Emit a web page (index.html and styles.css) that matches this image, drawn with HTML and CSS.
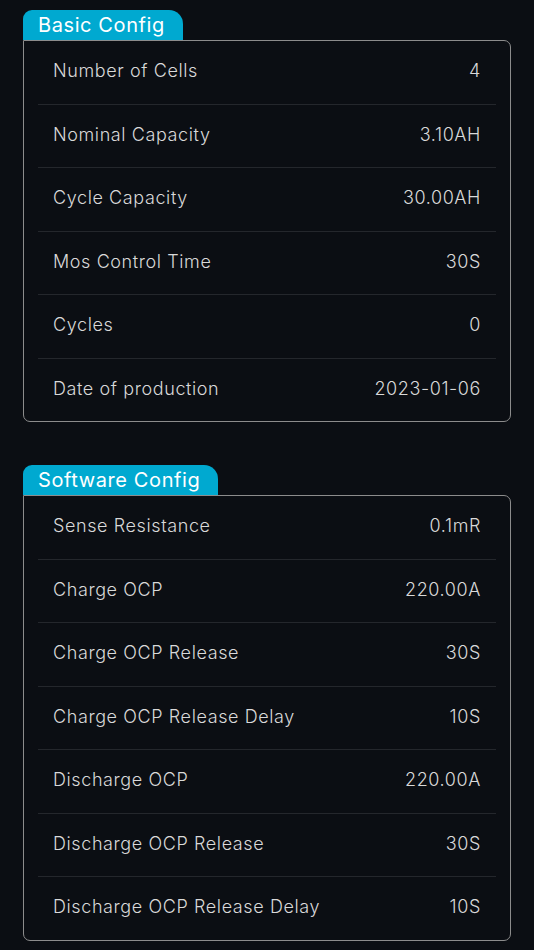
FILE: index.html
```html
<!DOCTYPE html>
<html lang="en">

<head>
    <meta charset="UTF-8">
    <meta name="viewport" content="width=device-width, initial-scale=1.0">
    <title>Battery Config</title>
    <link rel="stylesheet" href="styles.css">
</head>

<body>
    <section class="group">
        <div class="tab">Basic Config</div>
        <div class="card">
            <div class="row"><span>Number of Cells</span><span>4</span></div>
            <div class="row"><span>Nominal Capacity</span><span>3.10AH</span></div>
            <div class="row"><span>Cycle Capacity</span><span>30.00AH</span></div>
            <div class="row"><span>Mos Control Time</span><span>30S</span></div>
            <div class="row"><span>Cycles</span><span>0</span></div>
            <div class="row"><span>Date of production</span><span>2023-01-06</span></div>
        </div>
    </section>

    <section class="group">
        <div class="tab">Software Config</div>
        <div class="card">
            <div class="row"><span>Sense Resistance</span><span>0.1mR</span></div>
            <div class="row"><span>Charge OCP</span><span>220.00A</span></div>
            <div class="row"><span>Charge OCP Release</span><span>30S</span></div>
            <div class="row"><span>Charge OCP Release Delay</span><span>10S</span></div>
            <div class="row"><span>Discharge OCP</span><span>220.00A</span></div>
            <div class="row"><span>Discharge OCP Release</span><span>30S</span></div>
            <div class="row"><span>Discharge OCP Release Delay</span><span>10S</span></div>
        </div>
    </section>
</body>

</html>
```

FILE: styles.css
```css
* {
    box-sizing: border-box;
}

body {
    margin: 0;
    padding: 10px 0 0 23px;
    background-color: #0b0e13;
    font-family: Inter, "Noto Sans", sans-serif;
    color: #d9d9d9;
}

.group {
    width: 488px;
    margin-bottom: 43px;
}

.tab {
    display: inline-block;
    height: 30px;
    line-height: 30px;
    padding: 0 18px 0 15px;
    background-color: #00a9d0;
    color: #fff;
    font-size: 20px;
    letter-spacing: 0.6px;
    border-radius: 9px 14px 0 0;
}

.card {
    border: 1px solid #8c8c8c;
    border-radius: 0 7px 7px 7px;
    padding: 0 14px;
}

.row {
    display: flex;
    justify-content: space-between;
    align-items: center;
    height: 63.5px;
    padding: 0 15px 3px;
    font-size: 18px;
    font-weight: 300;
    letter-spacing: 0.6px;
    border-bottom: 1px solid #24272c;
}

.row:last-child {
    border-bottom: none;
    height: 62.5px;
}
```
